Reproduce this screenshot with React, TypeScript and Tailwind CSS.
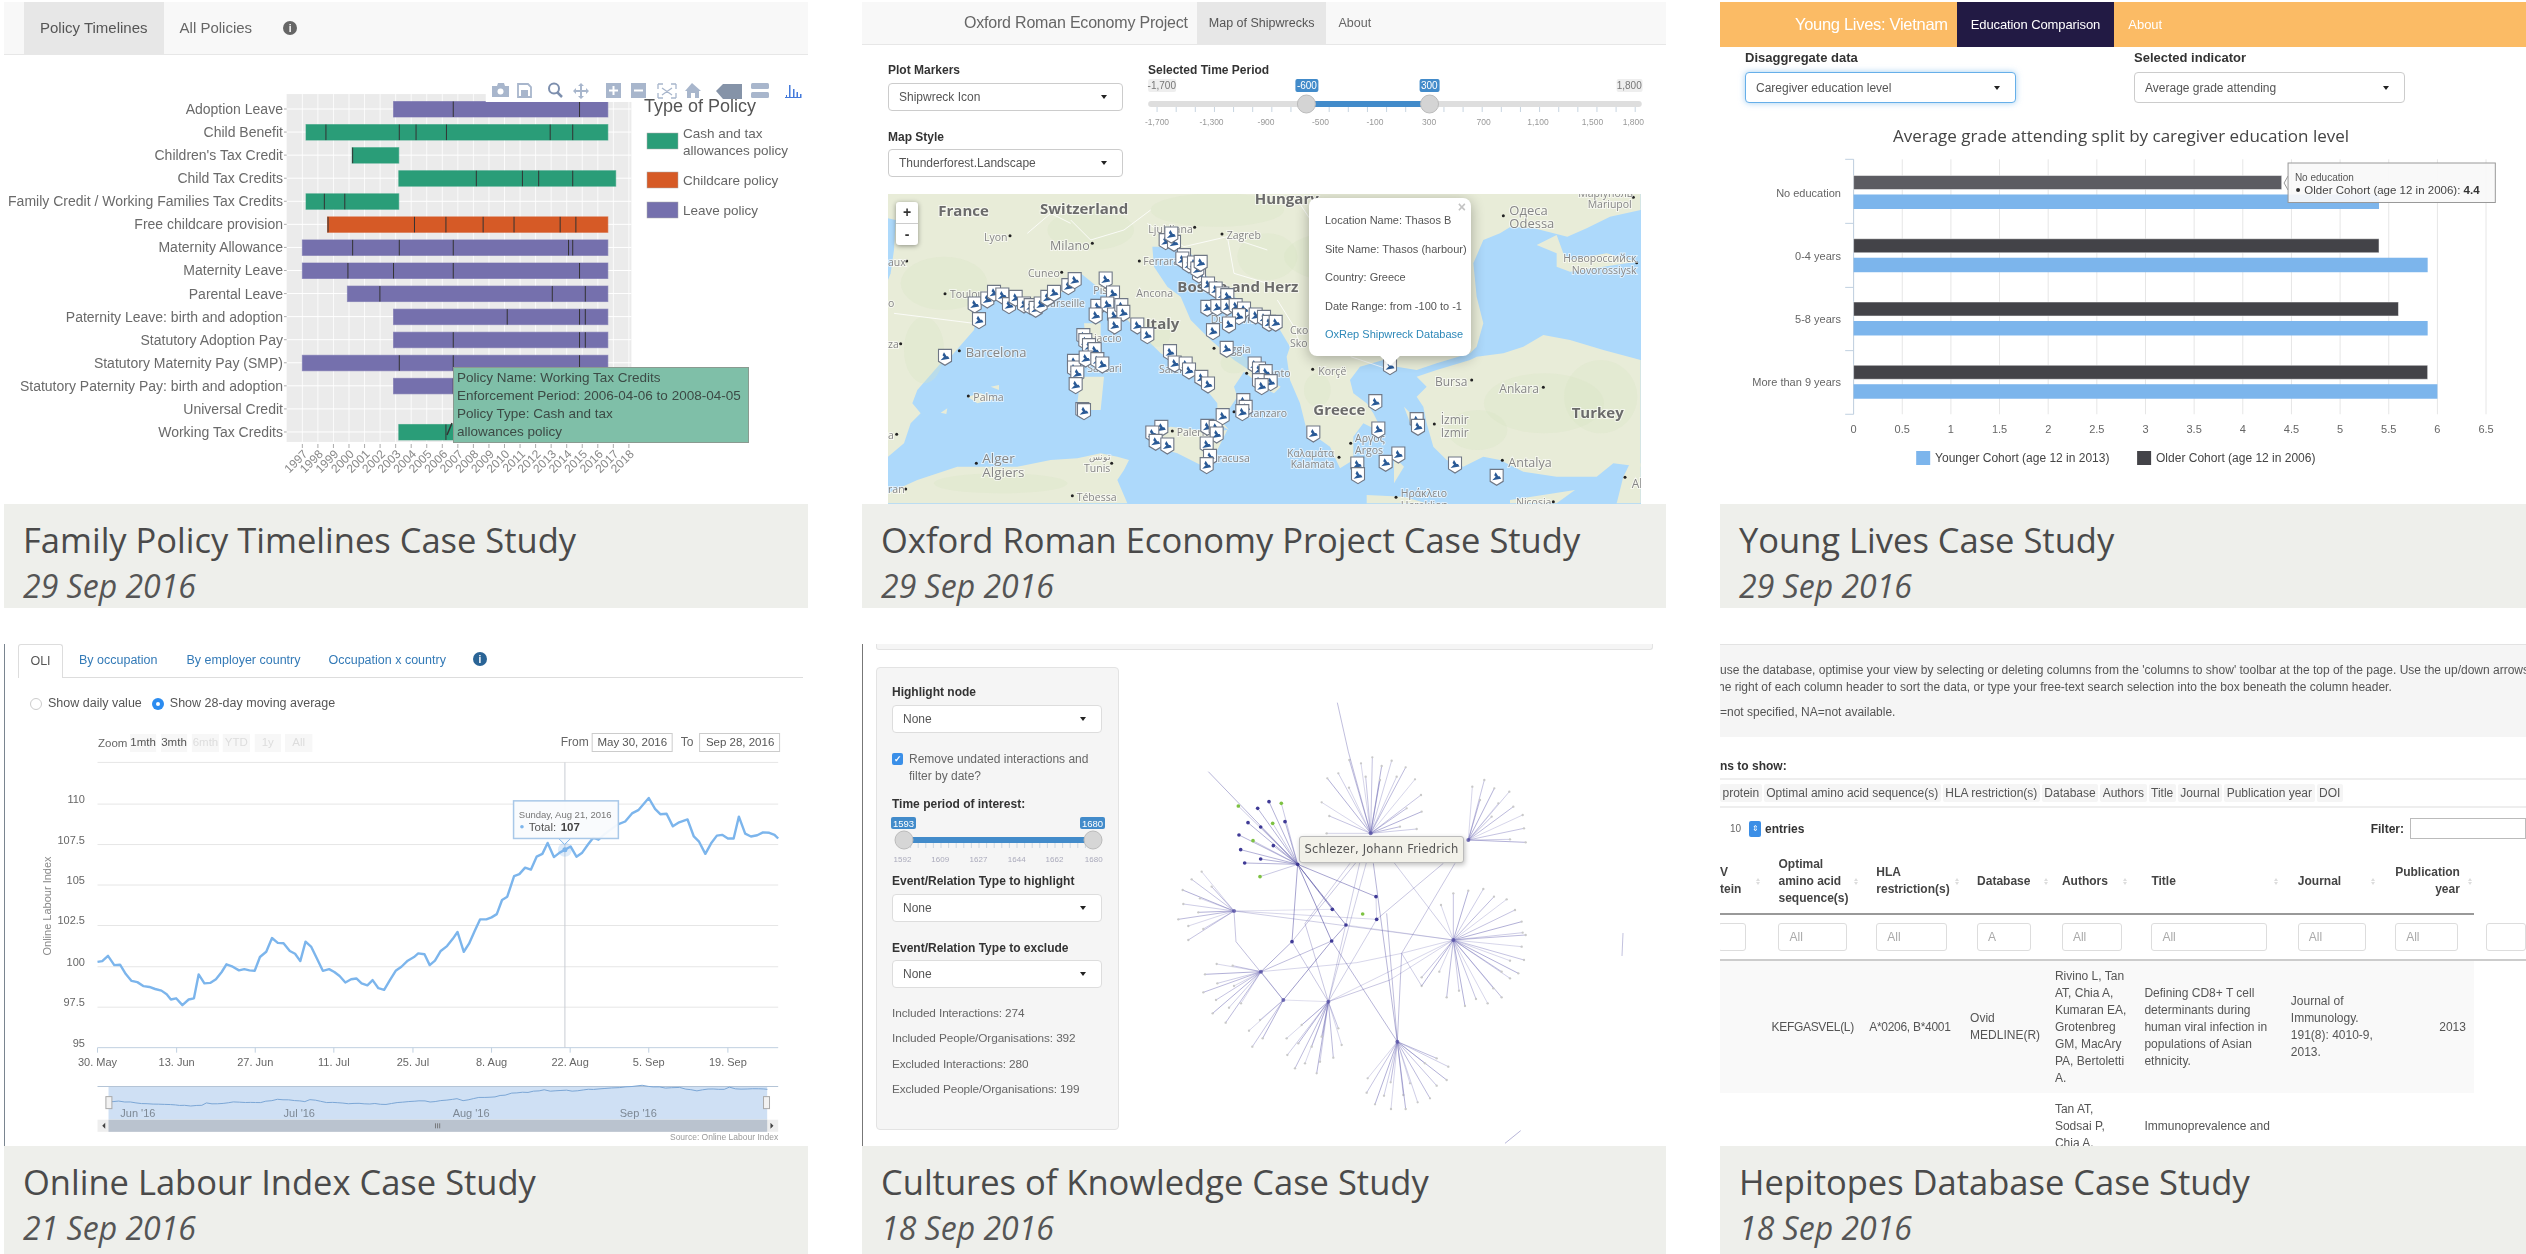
import React from "react";

type Pt = [number, number];

function Caret() {
  return <span className="w-0 h-0 border-x-[3.5px] border-x-transparent border-t-[4px] border-t-[#222]" />;
}

function Select({ text, className }: { text: string; className: string }) {
  return (
    <div className={"flex items-center justify-between rounded-[4px] bg-white pl-[10px] pr-[15px] text-[12px] text-[#555] " + className}>
      <span>{text}</span>
      <Caret />
    </div>
  );
}

function Info({ color }: { color: string }) {
  return (
    <span className={"flex h-[14px] w-[14px] items-center justify-center rounded-full text-[10px] font-bold text-white " + color}>i</span>
  );
}

function T({ x, y, s, size = 11, fill = "#666", anchor = "start", weight = 400, family }: { x: number; y: number; s: string; size?: number; fill?: string; anchor?: "start" | "end" | "middle"; weight?: number; family?: string }) {
  return (
    <text x={x} y={y} fontSize={size} fill={fill} textAnchor={anchor} fontWeight={weight} fontFamily={family} dominantBaseline="central">
      {s}
    </text>
  );
}

/* ---------- Panel 1 ---------- */
const PG = "#2a9d78";
const PO = "#d65a26";
const PP = "#7570ad";
const p1Rows: { n: string; a?: number; b?: number; c?: string; t?: number[] }[] = [
  { n: "Adoption Leave", a: 751, b: 1160, c: PP, t: [865, 1106] },
  { n: "Child Benefit", a: 584, b: 1160, c: PG, t: [622, 762, 794, 852, 1050, 1093] },
  { n: "Children's Tax Credit", a: 672, b: 761, c: PG, t: [673] },
  { n: "Child Tax Credits", a: 761, b: 1175, c: PG, t: [909, 997, 1028, 1093] },
  { n: "Family Credit / Working Families Tax Credits", a: 584, b: 761, c: PG, t: [619, 658] },
  { n: "Free childcare provision", a: 625, b: 1160, c: PO, t: [626, 791, 851, 922, 981, 1069, 1099] },
  { n: "Maternity Allowance", a: 577, b: 1160, c: PP, t: [673, 762, 865, 1085, 1093] },
  { n: "Maternity Leave", a: 577, b: 1160, c: PP, t: [664, 751, 865, 1106] },
  { n: "Parental Leave", a: 663, b: 1160, c: PP, t: [725, 1054, 1117] },
  { n: "Paternity Leave: birth and adoption", a: 751, b: 1160, c: PP, t: [968, 1106, 1117] },
  { n: "Statutory Adoption Pay", a: 751, b: 1160, c: PP, t: [865, 1106, 1117] },
  { n: "Statutory Maternity Pay (SMP)", a: 577, b: 1160, c: PP, t: [762, 865, 1106] },
  { n: "Statutory Paternity Pay: birth and adoption", a: 751, b: 1160, c: PP, t: [865] },
  { n: "Universal Credit" },
  { n: "Working Tax Credits", a: 761, b: 900, c: PG, t: [851] },
];

function PolicyPanel() {
  const X = (d: number) => d * 0.524;
  const Y = (d: number) => d * 0.3953;
  const rowY = (i: number) => 109 + i * 23.07;
  const years = Array.from({ length: 22 }, (_, i) => 1997 + i);
  const yx = (i: number) => X(577) + i * 15.55;
  const ic = "#a8b6cc";
  return (
    <div className="relative h-full">
      <div className="flex h-[53px] border-b border-[#e7e7e7] bg-[#f8f8f8] pl-[20px] text-[15px] text-[#666]">
        <div className="flex items-center bg-[#e7e7e7] px-[16px] text-[#555]">Policy Timelines</div>
        <div className="flex items-center px-[16px]">All Policies</div>
        <div className="flex items-center pl-[15px]"><Info color="bg-[#666]" /></div>
      </div>
      <svg viewBox="4 55 804 449" className="block h-[449px] w-[804px]">
        <rect x={X(547)} y={Y(238)} width={X(1205) - X(547)} height={Y(1118) - Y(238)} fill="#ebebeb" />
        {years.map((_, i) => (
          <line key={i} x1={yx(i)} x2={yx(i)} y1={Y(238)} y2={Y(1118)} stroke="#fff" strokeWidth="0.8" />
        ))}
        {p1Rows.map((_, i) => (
          <line key={i} x1={X(547)} x2={X(1205)} y1={rowY(i)} y2={rowY(i)} stroke="#fff" strokeWidth="1" />
        ))}
        {p1Rows.map((r, i) => (
          <g key={r.n}>
            <T x={X(540)} y={rowY(i)} s={r.n} anchor="end" size={14} fill="#6a6a6a" />
            <line x1={X(542)} x2={X(547)} y1={rowY(i)} y2={rowY(i)} stroke="#888" strokeWidth="0.7" />
            {r.a !== undefined && r.b !== undefined && (
              <rect x={X(r.a)} y={rowY(i) - 7.5} width={X(r.b) - X(r.a)} height={15.5} fill={r.c} stroke={r.c} strokeOpacity="0.6" />
            )}
            {r.t?.map((t) => (
              <line key={t} x1={X(t)} x2={X(t)} y1={rowY(i) - 7.5} y2={rowY(i) + 8} stroke="#333" strokeWidth="1" />
            ))}
          </g>
        ))}
        {years.map((y, i) => (
          <g key={y}>
            <line x1={yx(i)} x2={yx(i)} y1={444} y2={448} stroke="#888" strokeWidth="0.7" />
            <text x={yx(i) + 3} y={452} fontSize="12" fill="#888" textAnchor="end" dominantBaseline="central" transform={`rotate(-45 ${yx(i) + 3} 452)`}>{y}</text>
          </g>
        ))}
        <rect x={X(927)} y={Y(205)} width={X(1545) - X(927)} height={Y(258) - Y(205)} fill="#fff" />
        <g fill={ic}>
          <path d="M492 86h5l1-3h6l1 3h4v11h-17z" />
          <circle cx="500.5" cy="91.5" r="3" fill="#fff" />
          <path d="M518 84h10l3 3v10h-13z" fill="none" stroke={ic} strokeWidth="1.8" />
          <rect x="521" y="90" width="7" height="7" />
          <circle cx="554" cy="88.5" r="5" fill="none" stroke="#7d8fae" strokeWidth="2" />
          <path d="M557 92l5 5" stroke="#7d8fae" strokeWidth="2.5" />
          <path d="M581 83l3 3h-2v4h4v-2l3 3-3 3v-2h-4v4h2l-3 3-3-3h2v-4h-4v2l-3-3 3-3v2h4v-4h-2z" />
          <path fillRule="evenodd" d="M606 83h15v15h-15zM612.5 86v3.5H609v2h3.5V95h2v-3.5h3.5v-2h-3.5V86z" />
          <path fillRule="evenodd" d="M631 83h15v15h-15zM634 89.5v2h9v-2z" />
          <path d="M658 84h5M658 84v5M676 84h-5M676 84v5M658 98h5M658 98v-5M676 98h-5M676 98v-5M662 88l10 7M672 88l-10 7" fill="none" stroke={ic} strokeWidth="1.3" />
          <path d="M692 83l9 8h-2v7h-4v-5h-4v5h-4v-7h-2z" />
          <path d="M716 91l7-7h19v15h-19z" fill="#8593a8" />
          <rect x="751" y="83" width="18" height="6" rx="1.5" />
          <rect x="751" y="92" width="18" height="6" rx="1.5" />
          <path d="M785 97h1v-2h1v2h2V85h1.5v12H793V89h1.5v8h2v-5h1.5v5h2v-3h1.5v4H785z" fill="#447adb" />
        </g>
        <T x={644} y={106} s="Type of Policy" size={18} fill="#555" />
        {[[133, PG], [172, PO], [202, PP]].map(([y, c]) => (
          <rect key={c as string} x={647} y={y as number} width={31} height={16} fill={c as string} stroke="#aaa" strokeWidth="0.5" />
        ))}
        <T x={683} y={133} s="Cash and tax" size={13.5} />
        <T x={683} y={150} s="allowances policy" size={13.5} />
        <T x={683} y={180} s="Childcare policy" size={13.5} />
        <T x={683} y={210} s="Leave policy" size={13.5} />
        <path d="M452 423l-5 12" stroke="#333" strokeWidth="1.5" />
      </svg>
      <div className="absolute left-[449px] top-[365px] flex h-[76px] w-[296px] flex-col justify-center border border-[#8a9a90] bg-[#7fbfa8] pl-[3px] text-[13.5px] leading-[18px] text-[#3c4a45]">
        <div>Policy Name: Working Tax Credits</div>
        <div>Enforcement Period: 2006-04-06 to 2008-04-05</div>
        <div>Policy Type: Cash and tax</div>
        <div>allowances policy</div>
      </div>
    </div>
  );
}

/* ---------- Panel 2 ---------- */
const europe = "12,0 2270,0 2270,60 2178,80 2108,115 2050,140 1950,115 1880,110 1848,130 1798,150 1768,220 1778,320 1798,400 1778,470 1758,490 1658,520 1598,540 1538,530 1498,510 1428,530 1398,570 1408,610 1448,640 1468,670 1498,730 1438,700 1408,740 1408,810 1368,835 1338,770 1268,720 1248,640 1218,570 1208,500 1218,470 1188,420 1158,390 1100,350 1000,290 960,250 920,190 870,170 830,170 805,170 810,230 850,290 890,320 920,390 980,450 1050,510 1110,550 1190,590 1170,610 1140,595 1080,545 1050,590 1060,620 1040,650 1010,690 1035,720 1000,700 1000,640 960,590 900,530 830,490 770,430 720,380 690,330 640,290 590,250 530,310 450,360 340,320 290,320 280,370 270,420 200,500 170,520 100,600 85,640 110,670 80,700 60,760 12,800";
const landParts = [
  europe,
  "800,725 860,710 985,725 1030,720 1000,780 985,840 950,825 880,790 810,770",
  "590,560 660,560 650,660 590,660 580,640",
  "600,400 650,400 650,480 610,500",
  "250,620 290,610 340,625 280,640",
  "320,590 345,585 345,600",
  "170,668 190,655 187,672",
  "12,910 100,870 220,830 400,830 500,810 580,805 650,790 700,800 735,810 720,840 700,870 730,940 12,940",
  "1778,500 1858,490 1918,470 1978,435 2058,450 2158,480 2270,510 2270,830 2188,820 2138,860 2018,860 1918,845 1848,810 1798,800 1738,830 1688,810 1648,770 1628,700 1618,650 1598,620 1628,590 1598,560 1658,540 1758,510",
  "1448,915 1558,920 1628,940 1448,940",
  "1878,930 2073,900 2018,940 1878,940",
  "2238,820 2270,820 2270,940 2198,940 2218,860",
  "1958,165 2018,135 2038,190 2058,210 2168,190 2258,215 2158,230 2058,245 2018,230 2018,190",
  "1560,650 1600,690 1590,730",
  "1530,800 1560,830 1530,880",
];
const biscay = "12,85 35,90 30,180 20,250 12,270";
const patches: [number, number, number, number][] = [
  [180, 280, 130, 80], [620, 120, 130, 60], [1000, 60, 200, 50], [1150, 200, 90, 70], [820, 430, 40, 40], [1050, 520, 40, 30], [1980, 640, 180, 90], [2150, 620, 110, 110], [1400, 200, 200, 80], [120, 480, 60, 100], [350, 880, 200, 30], [1300, 600, 40, 50], [1780, 720, 90, 60],
];
const markers: Pt[] = [
  [845,155],[870,160],[862,135],[900,200],[895,210],[915,225],[930,222],[945,255],[940,240],[950,220],[972,285],[995,300],[1015,315],[1030,320],[970,355],[1000,353],[1030,352],[1055,350],[1080,360],[1065,380],[1035,405],[1115,378],[1140,385],[1155,400],[1175,400],[987,425],[1028,478],
  [665,270],[687,312],[640,352],[670,345],[635,378],[690,378],[712,350],[718,370],[692,408],[760,408],[790,437],[858,488],[872,522],[905,525],[915,543],[952,565],[972,585],
  [598,440],[604,455],[615,470],[632,482],[570,517],[570,537],[605,507],[640,512],[655,525],[580,552],[575,587],[595,662],[600,665],
  [272,345],[285,392],[310,330],[330,310],[355,318],[375,347],[395,325],[420,345],[440,350],[455,358],[470,345],[490,325],[510,310],[553,290],[572,272],[183,502],
  [832,715],[805,732],[815,757],[850,768],[970,712],[995,715],[998,735],[968,765],[978,802],[968,827],[1016,680],[1078,635],[1085,655],[1075,668],
  [1112,525],[1125,540],[1145,548],[1125,575],[1160,578],[1133,590],
  [1518,530],[1474,638],[1288,732],[1483,720],[1598,692],[1602,712],[1543,795],[1505,820],[1420,825],[1422,857],[1713,825],[1838,862],
];
type Lab = [string, number, number, number?, boolean?];
const z8 = 1158;
const mapLabels: Lab[] = [
  ["France",163,60,15,true],["Switzerland",468,53,15,true],["Hungary",1112,25,15,true],["Lyon",300,140],["Milano",498,165,12.5],["Ljubljana",793,118],["Zagreb",1028,135],["aux",12,215],["Cuneo",432,250],["Ferrara",778,213],["Ancona",757,310],["Toulouse",198,312],["Bosnia and Herz",880,288,15,true],["Marseille",470,338],["Pisa",628,300],["Italy",785,400,15,true],["Dubrovnik",980,387],["Barcelona",245,485,13],["za",12,463],["o",12,340],["Ajaccio",610,445],["Sassari",610,535],["Salerno",825,537],["Foggia",1005,478],["Taranto",1105,550],["Catanzaro",1060,670],["Palermo",878,727],["Siracusa",975,803],["Palma",268,622],["a",12,735],["Alger",295,805,13.5],["Algiers",295,846,13.5],["تونس",615,800,9],["Tunis",600,833],["Tébessa",578,920],["ran",12,898],
  ["Odessa",z8+718,100,13],["Одеса",z8+718,60,13],["Mariupol",z8+953,42],["Маріуполь",z8+925,10],["Новороссийск",z8+880,205,10.5],["Novorossiysk",z8+905,240,10.5],["Ско",z8+60,420],["Sko",z8+60,458],["Korçë",z8+145,542],["Bursa",z8+495,575,12],["Ankara",z8+688,595,12],["Turkey",z8+905,665,15,true],["Greece",z8+130,658,15,true],["İzmir",z8+512,688,12],["Izmir",z8+512,728,12],["Αργος",z8+255,745],["Argos",z8+255,780],["Καλαμάτα",z8+52,788,10],["Kalamata",z8+62,822,10],["Antalya",z8+715,817,12.5],["Ηράκλειο",z8+392,908],["Heraklion",z8+392,945],["Nicosia",z8+738,935],["Al",z8+1085,880,12],
];
const mapDots: Pt[] = [[378,137],[625,160],[932,112],[1014,132],[68,213],[533,247],[766,213],[183,311],[226,482],[50,461],[990,475],[1088,550],[1050,665],[865,723],[253,618],[38,733],[277,820],[683,820],[565,917],[65,897],[z8+700,77],[z8+1090,22],[z8+1100,218],[z8+128,538],[z8+605,570],[z8+820,592],[z8+493,702],[z8+242,760],[z8+207,802],[z8+697,811],[z8+378,922],[z8+850,935],[z8+1065,862]];
const mx = (z: number) => z / 3 - 4;
const my = (z: number) => z / 3 - 4;

function RomanPanel() {
  const X = (d: number) => 850 + d * 0.524;
  const sliderLabs: [string, number][] = [["-1,700",586],["-1,300",690],["-900",794],["-500",898],["-100",1002],["300",1105],["700",1209],["1,100",1313],["1,500",1417],["1,800",1495]];
  const ticks = Array.from({ length: 26 }, (_, i) => 586 + i * 36.5).filter((d) => d < 1500);
  return (
    <div className="h-full">
      <div className="flex h-[43px] border-b border-[#e7e7e7] bg-[#f8f8f8] pl-[102px] text-[#666]">
        <div className="flex items-center pr-[9px] text-[16px] tracking-[-0.2px]">Oxford Roman Economy Project</div>
        <div className="flex items-center bg-[#e7e7e7] px-[12px] text-[12.5px] text-[#555]">Map of Shipwrecks</div>
        <div className="flex items-center px-[12px] text-[12.5px]">About</div>
      </div>
      <div className="flex h-[149px] pl-[26px]">
        <div className="w-[235px] pt-[18px]">
          <div className="text-[12px] font-bold leading-[14px] text-[#333]">Plot Markers</div>
          <Select text="Shipwreck Icon" className="mt-[6px] h-[28px] w-[235px] border border-[#ccc]" />
          <div className="mt-[19px] text-[12px] font-bold leading-[14px] text-[#333]">Map Style</div>
          <Select text="Thunderforest.Landscape" className="mt-[5px] h-[28px] w-[235px] border border-[#ccc]" />
        </div>
        <div className="ml-[22px] pt-[18px]">
          <div className="ml-[3px] text-[12px] font-bold leading-[14px] text-[#333]">Selected Time Period</div>
          <svg viewBox="1145 80 505 52" className="block h-[52px] w-[505px]">
            <rect x={X(569)} y={82} width={28} height={13} rx={2} fill="#eee" />
            <T x={X(595)} y={88.5} s="-1,700" size={10} fill="#777" anchor="middle" />
            <rect x={X(1463)} y={82} width={26} height={13} rx={2} fill="#eee" />
            <T x={X(1487)} y={88.5} s="1,800" size={10} fill="#777" anchor="middle" />
            <rect x={X(850)} y={82} width={23} height={13} rx={2} fill="#428bca" />
            <T x={X(872)} y={88.5} s="-600" size={10} fill="#fff" anchor="middle" />
            <rect x={X(1087)} y={82} width={20} height={13} rx={2} fill="#428bca" />
            <T x={X(1105.5)} y={88.5} s="300" size={10} fill="#fff" anchor="middle" />
            <rect x={X(569)} y={104} width={X(1511) - X(569)} height={6} rx={3} fill="#dedede" />
            <rect x={X(871)} y={104} width={X(1106) - X(871)} height={6} fill="#428bca" />
            {ticks.map((d) => (
              <line key={d} x1={X(d)} x2={X(d)} y1={110} y2={115} stroke="#b9c9d8" strokeWidth="0.8" />
            ))}
            {sliderLabs.map(([s, d]) => (
              <T key={s} x={X(d)} y={125} s={s} size={8.5} fill="#999" anchor="middle" />
            ))}
            {[871, 1106].map((d) => (
              <circle key={d} cx={X(d)} cy={107} r={9} fill="#d4d4d4" stroke="#bbb" />
            ))}
          </svg>
        </div>
      </div>
      <div className="relative ml-[26px] h-[310px] w-[753px] overflow-hidden">
        <svg viewBox="0 0 753 310" className="block h-[310px] w-[753px] font-['Open_Sans']">
          <rect width="753" height="310" fill="#add9fb" />
          <g transform="translate(-4,-4) scale(0.33333)">
            {landParts.map((p, i) => (
              <polygon key={i} points={p} fill="#e8ecd8" />
            ))}
            {patches.map(([x, y, a, b], i) => (
              <ellipse key={i} cx={x} cy={y} rx={a} ry={b} fill="#d7e3c2" opacity="0.3" />
            ))}
            <polygon points={biscay} fill="#add9fb" />
            <path d="M560 90l60 60 100-30 80-60M790 100l110 70 130-30 120 40M1030 140l20 110 100 30M1240 30l60 90 40 120 80 80M1400 500l120 40M430 130l70-60 60 30M30 370l240 30M1180 330l50 80 20 60" fill="none" stroke="#fff" strokeWidth="3" opacity="0.8" />
          </g>
          {mapDots.map(([x, y], i) => (
            <circle key={i} cx={mx(x)} cy={my(y)} r={1.5} fill="#222" />
          ))}
          {mapLabels.map(([s, x, y, size, bold], i) => (
            <text key={i} x={mx(x)} y={my(y)} fontSize={size ?? 10.5} fontWeight={bold ? 700 : 400} fill={bold ? "#6b6b6b" : "#868686"} stroke="#ffffff" strokeOpacity="0.6" strokeWidth="2" paintOrder="stroke" dominantBaseline="central">
              {s}
            </text>
          ))}
          {markers.map(([x, y], i) => (
            <g key={i} transform={`translate(${mx(x)} ${my(y)})`}>
              <path d="M-6.5-8h13v12l-6.5 4-6.500-4z" fill="#fff" stroke="#6f7785" strokeWidth="1.1" />
              <path d="M-4.500 3l9-1.500-1.500-2.500h-1.500l-2.500-4-1.500 3 1.500 1.500z" fill="#2a5a96" />
            </g>
          ))}
        </svg>
        <div className="absolute left-[8px] top-[8px] flex h-[43px] w-[22px] flex-col rounded-[3px] bg-white text-center text-[14px] font-bold leading-[21px] text-[#333] shadow-[0_1px_5px_rgba(0,0,0,0.4)]">
          <div className="h-[22px] border-b border-[#ccc]">+</div>
          <div className="h-[21px]">-</div>
        </div>
        <div className="absolute left-[421px] top-[4px] flex h-[158px] w-[162px] flex-col justify-between rounded-[8px] bg-white py-[15px] pl-[16px] text-[11px] leading-[14px] text-[#555] shadow-[0_3px_14px_rgba(0,0,0,0.3)]">
          <div>Location Name: Thasos B</div>
          <div>Site Name: Thasos (harbour)</div>
          <div>Country: Greece</div>
          <div>Date Range: from -100 to -1</div>
          <div className="text-[#2d88b8]">OxRep Shipwreck Database</div>
          <div className="absolute right-[5px] top-[2px] text-[14px] font-bold text-[#c3c3c3]">×</div>
          <div className="absolute bottom-[-7px] left-[74px] h-[14px] w-[14px] rotate-45 bg-white" />
        </div>
      </div>
    </div>
  );
}

/* ---------- Panel 3 ---------- */
function LivesPanel() {
  const X = (d: number) => 1700 + d * 0.526;
  const Y = (d: number) => d * 0.3953;
  const vx = (v: number) => X(292) + v * 97.3;
  const gr = Array.from({ length: 14 }, (_, i) => i * 0.5);
  const rows = [
    { l: "No education", y: 487, d: 4.4, b: 5.4 },
    { l: "0-4 years", y: 647, d: 5.4, b: 5.9 },
    { l: "5-8 years", y: 807, d: 5.6, b: 5.9 },
    { l: "More than 9 years", y: 967, d: 5.9, b: 6.0 },
  ];
  return (
    <div className="h-full">
      <div className="flex h-[45px] bg-[#fbbb65] pl-[75px] text-white">
        <div className="flex items-center pr-[9px] text-[16.5px] tracking-[-0.3px]">Young Lives: Vietnam</div>
        <div className="flex items-center bg-[#221a44] px-[14px] text-[13px] tracking-[-0.1px]">Education Comparison</div>
        <div className="flex items-center px-[14px] text-[13px]">About</div>
      </div>
      <div className="flex h-[68px] pl-[25px] pt-[3px]">
        <div className="w-[389px]">
          <div className="text-[13px] font-bold leading-[16px] text-[#333]">Disaggregate data</div>
          <Select text="Caregiver education level" className="mt-[6px] h-[31px] w-[271px] border border-[#66afe9] shadow-[0_0_6px_rgba(102,175,233,0.6)]" />
        </div>
        <div>
          <div className="text-[13px] font-bold leading-[16px] text-[#333]">Selected indicator</div>
          <Select text="Average grade attending" className="mt-[6px] h-[31px] w-[271px] border border-[#ccc]" />
        </div>
      </div>
      <svg viewBox="1720 115 806 389" className="block h-[389px] w-[806px] overflow-hidden">
        <T x={2121} y={135} s="Average grade attending split by caregiver education level" size={17} fill="#444" anchor="middle" family="Open Sans" />
        {gr.map((v) => (
          <g key={v}>
            <line x1={vx(v)} x2={vx(v)} y1={Y(403)} y2={Y(1048)} stroke="#e6e6e6" />
            <T x={vx(v)} y={429} s={String(v)} size={11} fill="#666" anchor="middle" />
          </g>
        ))}
        <line x1={X(292)} x2={X(292)} y1={Y(403)} y2={Y(1048)} stroke="#c0d0e0" />
        {[403, 565, 727, 887, 1048].map((y) => (
          <line key={y} x1={X(276)} x2={X(292)} y1={Y(y)} y2={Y(y)} stroke="#c0d0e0" />
        ))}
        {rows.map((r, i) => (
          <g key={r.l}>
            <T x={X(268)} y={Y(r.y)} s={r.l} size={11} anchor="end" fill="#666" />
            <rect x={X(292)} y={Y(r.y - 43)} width={vx(r.d) - X(292)} height={14} fill={i === 0 ? "#5c5c62" : "#434348"} stroke="#fff" strokeOpacity="0.5" />
            <rect x={X(292)} y={Y(r.y + 5)} width={vx(r.b) - X(292)} height={14.5} fill="#7cb5ec" />
          </g>
        ))}
        <rect x={X(411)} y={451} width={14} height={14} fill="#7cb5ec" />
        <T x={X(447)} y={458} s="Younger Cohort (age 12 in 2013)" size={12} fill="#444" />
        <rect x={X(831)} y={451} width={14} height={14} fill="#434348" />
        <T x={X(867)} y={458} s="Older Cohort (age 12 in 2006)" size={12} fill="#444" />
        <path d={`M${X(1118)} 176l-4 7 4 7`} fill="#f9f9f9" stroke="#999" />
        <rect x={X(1118)} y={163} width={X(1512) - X(1118)} height={39.5} fill="#f9f9f9" fillOpacity="0.92" stroke="#999" />
        <T x={X(1131)} y={177} s="No education" size={10} fill="#555" />
        <circle cx={X(1137)} cy={190} r={2} fill="#333" />
        <text x={X(1149)} y={190} fontSize="11.5" fill="#444" dominantBaseline="central">
          Older Cohort (age 12 in 2006): <tspan fontWeight="700" fill="#333">4.4</tspan>
        </text>
      </svg>
    </div>
  );
}

/* ---------- Panel 4 ---------- */
const olPts: Pt[] = [[188,845],[197,843],[208,830],[220,853],[231,852],[242,875],[253,892],[264,895],[276,905],[287,907],[298,912],[310,916],[320,925],[328,938],[338,935],[350,952],[362,938],[372,935],[381,876],[392,898],[403,897],[414,888],[425,870],[434,851],[446,857],[458,866],[468,863],[478,866],[488,867],[498,833],[510,820],[521,786],[532,798],[543,799],[555,818],[565,825],[575,843],[585,795],[596,808],[606,835],[618,867],[630,863],[640,870],[650,880],[661,896],[672,888],[682,886],[692,898],[703,903],[713,890],[724,910],[735,914],[746,890],[757,867],[768,857],[780,842],[792,833],[800,824],[812,826],[822,853],[832,842],[843,818],[855,806],[866,788],[875,771],[887,820],[897,800],[908,768],[918,740],[930,740],[940,735],[950,727],[960,692],[970,684],[983,633],[993,628],[1004,612],[1015,617],[1026,585],[1037,578],[1047,551],[1059,586],[1070,575],[1080,568],[1091,560],[1102,585],[1113,575],[1124,555],[1134,538],[1144,543],[1155,530],[1165,520],[1180,506],[1195,498],[1208,478],[1220,470],[1240,440],[1252,467],[1262,480],[1274,479],[1286,510],[1298,500],[1314,493],[1326,535],[1336,548],[1348,578],[1359,552],[1370,533],[1380,531],[1391,540],[1402,540],[1412,486],[1424,528],[1435,535],[1447,532],[1458,525],[1470,526],[1480,531],[1487,540]];

function LabourPanel() {
  const X = (d: number) => d * 0.524;
  const Y = (d: number) => 620 + d * 0.4046;
  const gridY: [string, number][] = [["110",455],["107.5",555],["105",655],["102.5",755],["100",857],["97.5",957],["95",1057]];
  const xLabs: [string, number][] = [["30. May",188],["13. Jun",339],["27. Jun",489],["11. Jul",639],["25. Jul",790],["8. Aug",940],["22. Aug",1090],["5. Sep",1240],["19. Sep",1391]];
  const btns: [string, number, number, string][] = [["1mth",250,300,"#555"],["3mth",309,359,"#555"],["6mth",368,420,"#ddd"],["YTD",427,479,"#ddd"],["1y",488,538,"#ddd"],["All",546,598,"#ddd"]];
  const line = olPts.map(([x, y]) => `${X(x)},${Y(y)}`).join(" ");
  const nav = olPts.map(([x, y]) => `${X(209 + (x - 188) * 0.968)},${Y(1150 + (y - 440) * 0.1)}`).join(" ");
  return (
    <div className="h-full border-l-[1.5px] border-[#7a8590]">
      <div className="ml-[13px] mr-[5px] flex h-[34px] border-b border-[#ddd] text-[12.5px] text-[#337ab7]">
        <div className="flex h-[34px] w-[45px] items-center justify-center rounded-t-[3px] border border-b-0 border-[#ddd] bg-white text-[#555]">OLI</div>
        <div className="flex items-center pl-[16px]">By occupation</div>
        <div className="flex items-center pl-[29px]">By employer country</div>
        <div className="flex items-center pl-[28px]">Occupation x country</div>
        <div className="flex items-center pl-[27px] pb-[3px]"><Info color="bg-[#2a6496]" /></div>
      </div>
      <div className="flex h-[47px] items-center pl-[25px] pt-[4px] text-[12.5px] text-[#555]">
        <span className="mr-[6px] h-[12px] w-[12px] rounded-full border border-[#ccc] bg-white" />
        <span>Show daily value</span>
        <span className="ml-[10px] mr-[6px] flex h-[12px] w-[12px] items-center justify-center rounded-full bg-[#2b8cf0]"><span className="h-[4px] w-[4px] rounded-full bg-white" /></span>
        <span>Show 28-day moving average</span>
      </div>
      <svg viewBox="6 725 802 421" className="block h-[421px] w-[802px]">
        <T x={X(189)} y={743} s="Zoom" size={11.5} fill="#666" />
        {btns.map(([s, a, b, c]) => (
          <g key={s}>
            <rect x={X(a)} y={734} width={X(b) - X(a)} height={18} fill="#f7f7f7" />
            <T x={(X(a) + X(b)) / 2} y={742} s={s} size={11.5} fill={c} anchor="middle" />
          </g>
        ))}
        <T x={X(1072)} y={742} s="From" size={12} fill="#666" />
        <rect x={X(1132)} y={733.5} width={80} height={18} fill="#fff" stroke="#ccc" />
        <T x={X(1142)} y={742} s="May 30, 2016" size={11.5} fill="#555" />
        <T x={X(1301)} y={742} s="To" size={12} fill="#666" />
        <rect x={X(1337)} y={733.5} width={80} height={18} fill="#fff" stroke="#ccc" />
        <T x={X(1349)} y={742} s="Sep 28, 2016" size={11.5} fill="#555" />
        <line x1={X(188)} x2={X(1487)} y1={Y(352)} y2={Y(352)} stroke="#e6e6e6" />
        {gridY.map(([s, y]) => (
          <g key={s}>
            <line x1={X(188)} x2={X(1487)} y1={Y(y)} y2={Y(y)} stroke={s === "95" ? "#c0d0e0" : "#e6e6e6"} />
            <T x={X(164)} y={Y(y) - 5} s={s} size={11} anchor="end" fill="#666" />
          </g>
        ))}
        {xLabs.map(([s, d]) => (
          <g key={s}>
            <line x1={X(d)} x2={X(d)} y1={Y(1057)} y2={Y(1057) + 5} stroke="#c0d0e0" />
            <T x={X(d)} y={1062} s={s} size={11} anchor="middle" fill="#666" />
          </g>
        ))}
        <text x={48} y={906} fontSize="11" fill="#888" textAnchor="middle" dominantBaseline="central" transform="rotate(-90 48 906)">Online Labour Index</text>
        <line x1={X(1080)} x2={X(1080)} y1={Y(352)} y2={Y(1057)} stroke="#c8ccd4" />
        <polyline points={line} fill="none" stroke="#7cb5ec" strokeWidth="2.4" strokeLinejoin="round" />
        <circle cx={X(1080)} cy={Y(568)} r={7} fill="#7cb5ec" opacity="0.25" />
        <circle cx={X(1080)} cy={Y(568)} r={2.5} fill="#7cb5ec" />
        <path d={`M${X(1068)} ${Y(540)}l6 6 6-6`} fill="#f7fafd" stroke="#7cb5ec" />
        <rect x={X(982)} y={Y(447)} width={X(1182) - X(982)} height={Y(540) - Y(447)} fill="#f9fbfd" fillOpacity="0.95" stroke="#a8c8e8" strokeWidth="1.5" />
        <T x={X(992)} y={Y(480)} s="Sunday, Aug 21, 2016" size={9.5} fill="#777" />
        <circle cx={X(998)} cy={Y(511)} r={1.8} fill="#7cb5ec" />
        <T x={X(1011)} y={Y(511)} s="Total: " size={11.5} fill="#555" />
        <T x={X(1072)} y={Y(511)} s="107" size={11.5} fill="#444" weight={700} />
        <rect x={X(209)} y={Y(1153)} width={X(1466) - X(209)} height={Y(1235) - Y(1153)} fill="#cfe0f4" />
        <line x1={X(188)} x2={X(1487)} y1={Y(1153)} y2={Y(1153)} stroke="#b4c4d6" />
        <polyline points={nav} fill="none" stroke="#7ca7d6" strokeWidth="1" />
        {[[265,"Jun '16"],[573,"Jul '16"],[901,"Aug '16"],[1220,"Sep '16"]].map(([d, s]) => (
          <T key={s as string} x={X(d as number)} y={Y(1218)} s={s as string} size={11} fill="#7d8894" anchor="middle" />
        ))}
        <rect x={X(188)} y={Y(1235)} width={X(1487) - X(188)} height={Y(1265) - Y(1235)} fill="#eee" />
        <rect x={X(209)} y={Y(1235)} width={X(1466) - X(209)} height={Y(1265) - Y(1235)} fill="#bac3cf" />
        <path d={`M${X(197)} ${Y(1250)}l3-3v6zM${X(1478)} ${Y(1250)}l-3-3v6z`} fill="#444" />
        <path d={`M${X(833)} ${Y(1244)}v5M${X(837)} ${Y(1244)}v5M${X(841)} ${Y(1244)}v5`} stroke="#666" strokeWidth="0.8" />
        <rect x={X(204)} y={Y(1178)} width={6} height={12} fill="#f2f2f2" stroke="#aaa" />
        <rect x={X(1459)} y={Y(1178)} width={6} height={12} fill="#f2f2f2" stroke="#aaa" />
        <T x={X(1487)} y={Y(1278)} s="Source: Online Labour Index" size={8.5} fill="#999" anchor="end" />
      </svg>
    </div>
  );
}

/* ---------- Panel 5 ---------- */
const hubs: { h: Pt; l: Pt[]; c?: string }[] = [
  { h: [632,460], l: [[485,367],[508,408],[502,295],[535,280],[568,240],[603,250],[637,232],[665,258],[695,242],[737,262],[765,298],[783,345],[785,395],[770,447],[720,440],[567,323],[617,290],[660,300],[710,290],[740,385],[500,460]] },
  { h: [925,480], l: [[937,320],[973,300],[1003,325],[1048,335],[1060,380],[1088,405],[1092,445],[1097,487],[1050,478],[960,360],[1015,370],[995,410]] },
  { h: [222,693], l: [[125,575],[95,598],[68,630],[70,672],[55,718],[85,738],[85,780],[115,697],[130,747],[155,620],[120,655]] },
  { h: [880,780], l: [[843,675],[880,640],[925,632],[970,627],[1002,650],[1040,658],[1065,690],[1085,725],[1088,758],[1097,765],[1085,800],[1092,840],[1075,880],[1050,895],[1025,952],[983,970],[948,957],[915,978],[897,932],[860,952],[838,875],[785,892],[785,918],[1000,925],[1025,875],[1050,842]] },
  { h: [303,875], l: [[170,852],[218,857],[135,883],[172,910],[130,937],[222,918],[168,960],[158,1000],[207,983],[197,1028],[243,970]] },
  { h: [505,965], l: [[380,1075],[425,1035],[415,1090],[382,1125],[405,1165],[435,1150],[455,1100],[470,1180],[480,1145],[520,1133],[545,1095],[535,1045],[485,1070]] },
  { h: [712,1085], l: [[623,1195],[620,1238],[645,1273],[672,1247],[692,1207],[693,1287],[730,1245],[737,1287],[773,1267],[810,1255],[750,1210],[830,1217],[860,1200],[865,1160],[830,1135],[795,1150]] },
  { h: [370,960], l: [[267,1052],[277,1100],[308,1075],[300,1020]] },
];
const links: [Pt, Pt, number][] = [
  [[532,68],[565,215],0.4],[[565,215],[632,460],0.4],[[145,275],[413,553],0.45],
  [[413,553],[648,650],0.55],[[413,553],[517,688],0.65],[[413,553],[558,735],0.65],[[413,553],[396,785],0.55],[[413,553],[515,783],0.65],[[515,783],[712,1085],0.45],
  [[222,693],[880,780],0.3],[[222,693],[517,688],0.2],[[222,693],[228,785],0.35],[[228,785],[370,960],0.4],[[222,693],[650,718],0.25],
  [[303,875],[396,785],0.5],[[396,785],[590,545],0.35],[[303,875],[515,783],0.4],[[370,960],[515,783],0.6],[[515,783],[558,735],0.55],
  [[505,965],[620,545],0.3],[[505,965],[650,718],0.3],[[505,965],[600,545],0.3],[[505,965],[880,780],0.25],[[505,965],[690,900],0.35],[[690,900],[880,780],0.25],[[505,965],[435,730],0.35],[[435,730],[570,550],0.3],[[505,965],[396,785],0.35],
  [[303,875],[590,848],0.25],[[590,848],[725,820],0.25],[[725,820],[880,780],0.25],[[712,1085],[725,820],0.4],[[725,820],[885,550],0.35],[[712,1085],[640,550],0.45],[[712,1085],[680,700],0.4],
  [[850,550],[650,718],0.35],[[880,780],[700,545],0.3],[[725,820],[785,918],0.3],[[370,960],[505,965],0.2],[[303,875],[370,960],0.3],[[648,650],[650,718],0.25],[[558,735],[880,780],0.2],
  [[1035,1390],[1082,1352],0.45],
];
const darkNodes: Pt[] = [[327,365],[293,385],[264,428],[302,441],[237,465],[242,509],[254,549],[302,537],[340,497],[375,425],[648,650],[517,688],[558,735],[396,785],[515,783],[650,718],[413,553]];
const greenNodes: Pt[] = [[235,378],[364,370],[338,430],[279,482],[300,590],[608,702]];

function StatRow({ t }: { t: string }) {
  return <div className="h-[25.3px] text-[11.8px] leading-[25px] tracking-[-0.1px] text-[#666]">{t}</div>;
}
function CulturesPanel() {
  const sy = [["1592",100],["1609",172],["1627",245],["1644",318],["1662",390],["1680",465]] as [string, number][];
  const X = (d: number) => (d - 80) * 0.524;
  return (
    <div className="h-full border-l border-[#777]">
      <div className="mx-[13px] h-[6px] rounded-b-[3px] border-x border-b border-[#e3e3e3] bg-[#f5f5f5]" />
      <div className="flex items-start">
        <div className="ml-[13px] mt-[17px] h-[463px] w-[243px] shrink-0 rounded-[4px] border border-[#e3e3e3] bg-[#f5f5f5] pl-[15px] pt-[17px] text-[#333]">
          <div className="text-[12px] font-bold leading-[14px]">Highlight node</div>
          <Select text="None" className="mt-[6px] h-[28px] w-[210px] border border-[#ddd]" />
          <div className="mt-[18px] flex items-start text-[12px] leading-[17px] text-[#666]">
            <span className="mr-[6px] mt-[2px] flex h-[12px] w-[11px] items-center justify-center rounded-[2px] bg-[#3a8fe8] text-[9px] font-bold text-white">✓</span>
            <span>Remove undated interactions and<br />filter by date?</span>
          </div>
          <div className="mt-[12px] text-[12px] font-bold leading-[14px]">Time period of interest:</div>
          <svg viewBox="0 0 214 50" className="mt-[6px] block h-[50px] w-[214px] overflow-visible">
            <rect x={-1} y={0} width={25} height={12} rx={2} fill="#428bca" />
            <T x={11.5} y={6} s="1593" size={9.5} fill="#fff" anchor="middle" />
            <rect x={188} y={0} width={25} height={12} rx={2} fill="#428bca" />
            <T x={200.5} y={6} s="1680" size={9.5} fill="#fff" anchor="middle" />
            <rect x={11} y={20} width={190} height={6} fill="#428bca" />
            {Array.from({ length: 26 }, (_, i) => 11 + i * 7.6).map((x) => (
              <line key={x} x1={x} x2={x} y1={26} y2={31} stroke="#bdccd9" strokeWidth="0.7" />
            ))}
            {sy.map(([s, d]) => (
              <T key={s} x={X(d)} y={42} s={s} size={8} fill="#aab" anchor="middle" />
            ))}
            <circle cx={12} cy={23} r={9} fill="#d6d6d6" stroke="#bbb" />
            <circle cx={201} cy={23} r={9} fill="#d6d6d6" stroke="#bbb" />
          </svg>
          <div className="mt-[7px] text-[12px] font-bold leading-[14px]">Event/Relation Type to highlight</div>
          <Select text="None" className="mt-[6px] h-[28px] w-[210px] border border-[#ddd]" />
          <div className="mt-[19px] text-[12px] font-bold leading-[14px]">Event/Relation Type to exclude</div>
          <Select text="None" className="mt-[5px] h-[28px] w-[210px] border border-[#ddd]" />
          <div className="mt-[13px]">
            <StatRow t="Included Interactions: 274" />
            <StatRow t="Included People/Organisations: 392" />
            <StatRow t="Excluded Interactions: 280" />
            <StatRow t="Excluded People/Organisations: 199" />
          </div>
        </div>
        <div className="relative h-[496px] flex-1">
          <svg viewBox="1119 650 547 496" className="block h-[496px] w-[547px]">
            <g transform="translate(1160 680) scale(0.33333)">
              {hubs.map((hub, i) =>
                hub.l.map((p, j) => (
                  <g key={`${i}-${j}`}>
                    <line x1={hub.h[0]} y1={hub.h[1]} x2={p[0]} y2={p[1]} stroke="#7a76ba" strokeOpacity={0.3 + ((j * 7) % 5) * 0.07} strokeWidth="3" />
                    <circle cx={p[0]} cy={p[1]} r="3.5" fill="#c9c9c9" />
                  </g>
                ))
              )}
              {darkNodes.slice(0, 10).map((p, i) => (
                <line key={i} x1={413} y1={553} x2={p[0]} y2={p[1]} stroke="#5752a6" strokeOpacity="0.45" strokeWidth="3" />
              ))}
              {greenNodes.slice(0, 5).map((p, i) => (
                <line key={i} x1={413} y1={553} x2={p[0]} y2={p[1]} stroke="#7a76ba" strokeOpacity="0.4" strokeWidth="3" />
              ))}
              {links.map(([a, b, o], i) => (
                <line key={i} x1={a[0]} y1={a[1]} x2={b[0]} y2={b[1]} stroke="#5f5aa8" strokeOpacity={o} strokeWidth="3" />
              ))}
              {hubs.map((hub, i) => (
                <circle key={i} cx={hub.h[0]} cy={hub.h[1]} r="6" fill="#5752a6" opacity="0.8" />
              ))}
              {darkNodes.map((p, i) => (
                <circle key={i} cx={p[0]} cy={p[1]} r="5.5" fill="#3f3a96" />
              ))}
              {greenNodes.map((p, i) => (
                <circle key={i} cx={p[0]} cy={p[1]} r="5.5" fill="#7dc242" />
              ))}
            </g>
            <line x1={1623} y1={933} x2={1622} y2={956} stroke="#b3b1d6" strokeWidth="0.8" />
          </svg>
          <div className="absolute left-[180px] top-[186px] flex h-[27px] w-[165px] items-center justify-center rounded-[3px] border border-[#bbb] bg-[#f2f1e9] font-['DejaVu_Sans'] text-[11.5px] tracking-[0.2px] text-[#555] shadow-[1px_2px_5px_rgba(0,0,0,0.25)]">
            Schlezer, Johann Friedrich
          </div>
        </div>
      </div>
    </div>
  );
}

/* ---------- Panel 6 ---------- */
function SortIcon() {
  return (
    <span className="ml-auto flex flex-col gap-[1px] pr-[2px]">
      <span className="h-0 w-0 border-x-[2.5px] border-b-[3px] border-x-transparent border-b-[#ddd]" />
      <span className="h-0 w-0 border-x-[2.5px] border-t-[3px] border-x-transparent border-t-[#ddd]" />
    </span>
  );
}
function FilterInput({ w, ml = "ml-[12px]", text = "All" }: { w: string; ml?: string; text?: string }) {
  return <div className={"flex h-[28px] items-center rounded-[3px] border border-[#ddd] bg-white pl-[10px] text-[12px] font-normal text-[#aaa] " + w + " " + ml}>{text}</div>;
}
function HepitopesPanel() {
  const chips = ["protein", "Optimal amino acid sequence(s)", "HLA restriction(s)", "Database", "Authors", "Title", "Journal", "Publication year", "DOI"];
  const colW = ["w-[47px]", "w-[98px]", "w-[101px]", "w-[85px]", "w-[90px]", "w-[147px]", "w-[98px]", "w-[91px]", "w-[39px]"];
  return (
    <div className="h-full overflow-hidden">
      <div className="h-[93px] overflow-hidden border-t border-[#e3e3e3] bg-[#f5f5f5] pt-[17px] text-[12px] leading-[17px] text-[#555]">
        <div className="whitespace-nowrap">use the database, optimise your view by selecting or deleting columns from the 'columns to show' toolbar at the top of the page. Use the up/down arrows</div>
        <div className="ml-[-2px] whitespace-nowrap">he right of each column header to sort the data, or type your free-text search selection into the box beneath the column header.</div>
        <div className="mt-[8px] whitespace-nowrap">=not specified, NA=not available.</div>
      </div>
      <div className="flex h-[38px] items-end text-[12px] font-bold leading-[18px] text-[#333]">ns to show:</div>
      <div className="mt-[3px] flex h-[30px] items-center gap-[2px] border-y-2 border-[#eee] text-[12px] text-[#555]">
        {chips.map((c) => (
          <span key={c} className="whitespace-nowrap rounded-[2px] bg-[#f5f5f5] px-[2.5px] py-[1px] leading-[16px]">{c}</span>
        ))}
      </div>
      <div className="flex h-[41px] items-center text-[12px] text-[#333]">
        <span className="ml-[4px] flex h-[13px] w-[37px] items-center justify-between rounded-[2px] bg-white pl-[6px] text-[10px] font-normal text-[#666]">
          10
          <span className="flex h-[16px] w-[12px] items-center justify-center rounded-[2px] bg-[#3b8ee6] text-[8px] text-white">⇕</span>
        </span>
        <span className="ml-[4px] font-bold">entries</span>
        <span className="ml-auto font-bold">Filter:</span>
        <span className="ml-[6px] h-[21px] w-[116px] border border-[#bbb] bg-white" />
      </div>
      <table className="table-fixed border-collapse text-[12px] leading-[17px] text-[#555]">
        <colgroup>
          {colW.map((w, i) => (
            <col key={i} className={w} />
          ))}
        </colgroup>
        <thead>
          <tr className="h-[65px] text-left text-[#444]">
            <th className="border-b-2 border-[#999] pl-0 font-bold"><div className="flex items-center pr-[4px]"><span>V<br />tein</span><SortIcon /></div></th>
            <th className="border-b-2 border-[#999] pl-[12px] font-bold"><div className="flex items-center pr-[4px]"><span>Optimal<br />amino acid<br />sequence(s)</span><SortIcon /></div></th>
            <th className="border-b-2 border-[#999] pl-[12px] font-bold"><div className="flex items-center pr-[4px]"><span>HLA<br />restriction(s)</span><SortIcon /></div></th>
            <th className="border-b-2 border-[#999] pl-[12px] font-bold"><div className="flex items-center"><span>Database</span><SortIcon /></div></th>
            <th className="border-b-2 border-[#999] pl-[12px] font-bold"><div className="flex items-center pr-[10px]"><span>Authors</span><SortIcon /></div></th>
            <th className="border-b-2 border-[#999] pl-[12px] font-bold"><div className="flex items-center pr-[6px]"><span>Title</span><SortIcon /></div></th>
            <th className="border-b-2 border-[#999] pl-[12px] font-bold"><div className="flex items-center pr-[6px]"><span>Journal</span><SortIcon /></div></th>
            <th className="border-b-2 border-[#999] pl-[12px] font-bold"><div className="flex items-center"><span className="text-right">Publication<br />year</span><SortIcon /></div></th>
            <th />
          </tr>
          <tr className="h-[46px] border-b-2 border-[#ccc]">
            <th><FilterInput w="w-[28px]" ml="ml-[-2px]" text="" /></th>
            <th><FilterInput w="w-[69px]" /></th>
            <th><FilterInput w="w-[71px]" /></th>
            <th><FilterInput w="w-[54px]" text="A" /></th>
            <th><FilterInput w="w-[60px]" /></th>
            <th><FilterInput w="w-[116px]" /></th>
            <th><FilterInput w="w-[68px]" /></th>
            <th><FilterInput w="w-[63px]" /></th>
            <th><FilterInput w="w-[40px]" text="" /></th>
          </tr>
        </thead>
        <tbody>
          <tr className="h-[133px]">
            <td className="bg-[#f9f9f9]" />
            <td className="whitespace-nowrap bg-[#f9f9f9] px-[5px] tracking-[-0.3px]">KEFGASVEL(L)</td>
            <td className="whitespace-nowrap bg-[#f9f9f9] px-[5px] tracking-[-0.3px]">A*0206, B*4001</td>
            <td className="bg-[#f9f9f9] px-[5px]">Ovid<br />MEDLINE(R)</td>
            <td className="bg-[#f9f9f9] px-[5px]">Rivino L, Tan<br />AT, Chia A,<br />Kumaran EA,<br />Grotenbreg<br />GM, MacAry<br />PA, Bertoletti<br />A.</td>
            <td className="bg-[#f9f9f9] px-[5px]">Defining CD8+ T cell<br />determinants during<br />human viral infection in<br />populations of Asian<br />ethnicity.</td>
            <td className="bg-[#f9f9f9] px-[5px]">Journal of<br />Immunology.<br />191(8): 4010-9,<br />2013.</td>
            <td className="bg-[#f9f9f9] px-[8px] text-right">2013</td>
            <td />
          </tr>
          <tr>
            <td /><td /><td /><td />
            <td className="px-[5px] pt-[8px] align-top">Tan AT,<br />Sodsai P,<br />Chia A,</td>
            <td className="px-[5px] pt-[25px] align-top">Immunoprevalence and</td>
            <td /><td /><td />
          </tr>
        </tbody>
      </table>
    </div>
  );
}

/* ---------- Shell ---------- */
function Card({ title, date, tall, children }: { title: string; date: string; tall?: boolean; children: React.ReactNode }) {
  return (
    <div className="min-w-0">
      <div className="h-[502px] overflow-hidden bg-white blur-[0.6px]">{children}</div>
      <div className={"bg-[#eeefeb] pl-[19px] font-['Open_Sans'] text-[#4a4a4a] " + (tall ? "h-[108px]" : "h-[104px]")}>
        <div className="pt-[14px] text-[34.5px] leading-[44px]">{title}</div>
        <div className="mt-[2px] text-[32px] italic leading-[44px] text-[#555]">{date}</div>
      </div>
    </div>
  );
}

export default function App() {
  return (
    <div className="grid h-[1254px] w-full grid-cols-[804px_804px_806px] content-start gap-x-[54px] gap-y-[36px] overflow-hidden bg-white pl-[4px] pt-[2px] font-['Liberation_Sans']">
      <Card title="Family Policy Timelines Case Study" date="29 Sep 2016"><PolicyPanel /></Card>
      <Card title="Oxford Roman Economy Project Case Study" date="29 Sep 2016"><RomanPanel /></Card>
      <Card title="Young Lives Case Study" date="29 Sep 2016"><LivesPanel /></Card>
      <Card tall title="Online Labour Index Case Study" date="21 Sep 2016"><LabourPanel /></Card>
      <Card tall title="Cultures of Knowledge Case Study" date="18 Sep 2016"><CulturesPanel /></Card>
      <Card tall title="Hepitopes Database Case Study" date="18 Sep 2016"><HepitopesPanel /></Card>
    </div>
  );
}
